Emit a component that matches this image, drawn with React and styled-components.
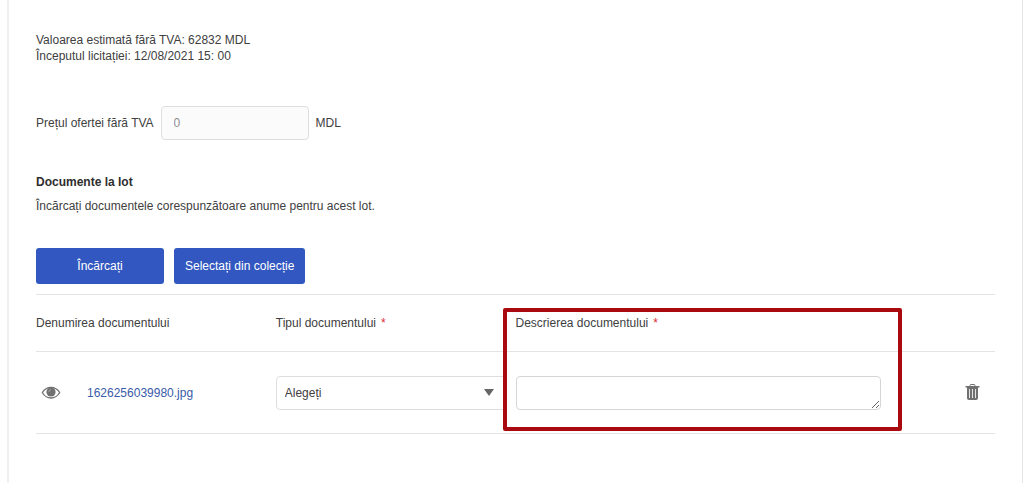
import React, { useState } from 'react';
import styled, { createGlobalStyle } from 'styled-components';

const GlobalStyle = createGlobalStyle`
  * {
    box-sizing: border-box;
  }
  body {
    margin: 0;
    background-color: #ffffff;
  }
  body, input, select, button, textarea {
    font-family: 'Liberation Sans', Arial, sans-serif;
    font-size: 12px;
    line-height: 16px;
    color: #404040;
  }
`;

const LotPanel = styled.main`
  min-height: 100vh;
  margin: 0 1px 0 7px;
  padding: 32px 27px 0;
  border: solid #f0f0f2;
  border-width: 0 1px 0 2px;
  border-right-color: #e4e4e8;
`;

const LotInfo = styled.div`
  margin-bottom: 42px;
`;

const Text = styled.p`
  margin: 0;
`;

const PriceRow = styled.div`
  display: flex;
  align-items: center;
  gap: 7px;
  margin-bottom: 34px;
`;

const PriceInput = styled.input`
  width: 148px;
  height: 34px;
  padding: 0 12px;
  border: 1px solid #dedede;
  border-radius: 4px;
  background-color: #fbfbfb;
  color: #8c8c8c;
`;

const SectionTitle = styled.h2`
  margin: 0 0 8px;
  font-size: 12px;
  line-height: 16px;
  font-weight: bold;
  color: #2e2e2e;
`;

const ButtonRow = styled.div`
  display: flex;
  gap: 10px;
  margin: 34px 0 10px;
`;

const Button = styled.button`
  min-width: 128px;
  height: 36px;
  padding: 0 11px;
  border: none;
  border-radius: 3px;
  background-color: #3257c0;
  color: #ffffff;
  cursor: pointer;
`;

const TableWrap = styled.div`
  position: relative;
`;

const Table = styled.table`
  width: 100%;
  table-layout: fixed;
  border-collapse: collapse;
  border-top: 1px solid #e4e4e4;
`;

const Row = styled.tr`
  height: ${(props) => (props.$head ? '57px' : '82px')};
  border-bottom: 1px solid #e4e4e4;
`;

const HeadCell = styled.th`
  width: ${(props) => props.$width || 'auto'};
  padding: 0;
  font-weight: normal;
  text-align: left;
`;

const Cell = styled.td`
  padding: 0;
`;

const Required = styled.span`
  margin-left: 5px;
  color: #e02b35;
`;

const FileCell = styled.div`
  display: flex;
  align-items: center;
  gap: 26px;
  padding-left: 5px;
`;

const IconButton = styled.button`
  display: block;
  padding: 0;
  border: none;
  background: none;
  color: #707070;
  cursor: pointer;

  svg {
    display: block;
  }
`;

const RemoveButton = styled(IconButton)`
  margin: 0 15px 0 auto;
`;

const FileLink = styled.a`
  color: #3a5ba8;
  text-decoration: none;
`;

const SelectBox = styled.div`
  position: relative;
  margin-right: 10px;

  &::after {
    content: '';
    position: absolute;
    top: 13px;
    right: 12px;
    border: solid transparent;
    border-width: 7px 5px 0;
    border-top-color: #666666;
    pointer-events: none;
  }
`;

const Select = styled.select`
  display: block;
  appearance: none;
  width: 100%;
  height: 34px;
  padding: 0 30px 0 8px;
  border: 1px solid #dedede;
  border-radius: 4px;
  background-color: #ffffff;
`;

const DescriptionRow = styled.div`
  display: flex;
  align-items: center;
`;

const Description = styled.textarea`
  display: block;
  width: calc(100% - 114px);
  height: 34px;
  padding: 8px;
  border: 1px solid #d6d6d6;
  border-radius: 4px;
  overflow: hidden;
  resize: both;
`;

const Highlight = styled.div`
  position: absolute;
  top: 14px;
  right: 93px;
  bottom: 3px;
  left: calc(50% - 13px);
  border: 4px solid #a90a10;
  border-radius: 2px;
  pointer-events: none;
`;

const EyeIcon = () => (
  <svg width="20" height="14" viewBox="0 0 20 14" aria-hidden="true">
    <path
      d="M1.3 6.5C3.500 3 6.500 1.300 10 1.300S16.500 3 18.700 6.500C16.500 10.300 13.500 12 10 12S3.500 10.300 1.300 6.500Z"
      fill="none"
      stroke="currentColor"
      strokeWidth="1.3"
    />
    <circle cx="10" cy="6" r="4.6" fill="currentColor" />
    <path
      d="M7.800 5.700A2.300 2.300 0 0 1 9.700 3.600"
      fill="none"
      stroke="#a8a8a8"
      strokeWidth="1"
      strokeLinecap="round"
    />
  </svg>
);

const TrashIcon = () => (
  <svg width="15" height="20" viewBox="0 0 15 20" aria-hidden="true">
    <path
      d="M5 3V2.500Q5 1.500 6 1.500h3q1 0 1 1V3"
      fill="none"
      stroke="currentColor"
      strokeWidth="1"
    />
    <path d="M.5 3h14v1.500H.5Z" fill="currentColor" />
    <path
      d="M2 4h11v11q0 2-2 2H4Q2 17 2 15Z"
      fill="currentColor"
    />
    <path
      d="M4.500 6v9M7.500 6v9M10.500 6v9"
      fill="none"
      stroke="#e6e6e6"
      strokeWidth="1"
    />
  </svg>
);

const App = () => {
  const [price, setPrice] = useState('0');
  const [documentType, setDocumentType] = useState('');
  const [description, setDescription] = useState('');

  return (
    <>
      <GlobalStyle />
      <LotPanel>
        <LotInfo>
          <Text>Valoarea estimată fără TVA: 62832 MDL</Text>
          <Text>Începutul licitației: 12/08/2021 15: 00</Text>
        </LotInfo>

        <PriceRow>
          <label htmlFor="price">Prețul ofertei fără TVA</label>
          <PriceInput
            id="price"
            type="text"
            value={price}
            onChange={(e) => setPrice(e.target.value)}
          />
          <span>MDL</span>
        </PriceRow>

        <SectionTitle>Documente la lot</SectionTitle>
        <Text>Încărcați documentele corespunzătoare anume pentru acest lot.</Text>

        <ButtonRow>
          <Button type="button">Încărcați</Button>
          <Button type="button">Selectați din colecție</Button>
        </ButtonRow>

        <TableWrap>
          <Table>
            <thead>
              <Row $head>
                <HeadCell $width="25%">Denumirea documentului</HeadCell>
                <HeadCell $width="25%">
                  <label htmlFor="documentType">Tipul documentului</label>
                  <Required>*</Required>
                </HeadCell>
                <HeadCell>
                  <label htmlFor="description">Descrierea documentului</label>
                  <Required>*</Required>
                </HeadCell>
                <HeadCell as="td" $width="80px" />
              </Row>
            </thead>
            <tbody>
              <Row>
                <Cell>
                  <FileCell>
                    <IconButton type="button" aria-label="Vizualizați">
                      <EyeIcon />
                    </IconButton>
                    <FileLink href="#document">1626256039980.jpg</FileLink>
                  </FileCell>
                </Cell>
                <Cell>
                  <SelectBox>
                    <Select
                      id="documentType"
                      value={documentType}
                      onChange={(e) => setDocumentType(e.target.value)}
                    >
                      <option value="">Alegeți</option>
                    </Select>
                  </SelectBox>
                </Cell>
                <Cell colSpan={2}>
                  <DescriptionRow>
                    <Description
                      id="description"
                      rows={1}
                      value={description}
                      onChange={(e) => setDescription(e.target.value)}
                    />
                    <RemoveButton type="button" aria-label="Ștergeți">
                      <TrashIcon />
                    </RemoveButton>
                  </DescriptionRow>
                </Cell>
              </Row>
            </tbody>
          </Table>
          <Highlight />
        </TableWrap>
      </LotPanel>
    </>
  );
};

export default App;
